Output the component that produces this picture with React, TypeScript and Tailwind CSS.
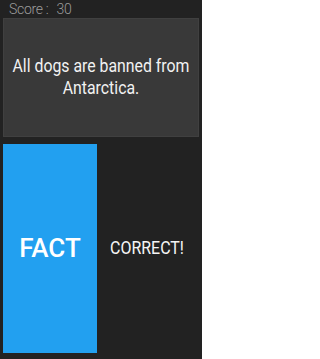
export default function App() {
  return (
    <div className="flex h-[359px] w-[202px] flex-col bg-[#222222] font-['Roboto',sans-serif]">
      {/* score bar */}
      <div className="flex h-[18px] items-center gap-[8px] pl-[9px] text-[14px] font-light leading-none tracking-[-0.3px] text-[#9c9c9c]">
        <span>Score :</span>
        <span>30</span>
      </div>

      {/* statement card */}
      <div className="mx-[3px] flex h-[119px] items-center justify-center overflow-hidden border border-[#404040] bg-[#393939] pb-[2px] text-[#f2f2f2]">
        <p className="w-[202px] shrink-0 scale-x-[0.88] text-center text-[18px] leading-[22px]">
          All dogs are banned from Antarctica.
        </p>
      </div>

      {/* answer row */}
      <div className="mt-[7px] flex h-[209px] pl-[3px]">
        <button className="flex w-[94px] items-center justify-center bg-[#22a0f0] text-[26px] font-medium text-white">
          FACT
        </button>
        <div className="flex flex-1 items-center justify-center pr-[6px]">
          <span className="scale-x-[0.84] text-[19px] text-[#f5f5f5]">CORRECT!</span>
        </div>
      </div>
    </div>
  )
}
